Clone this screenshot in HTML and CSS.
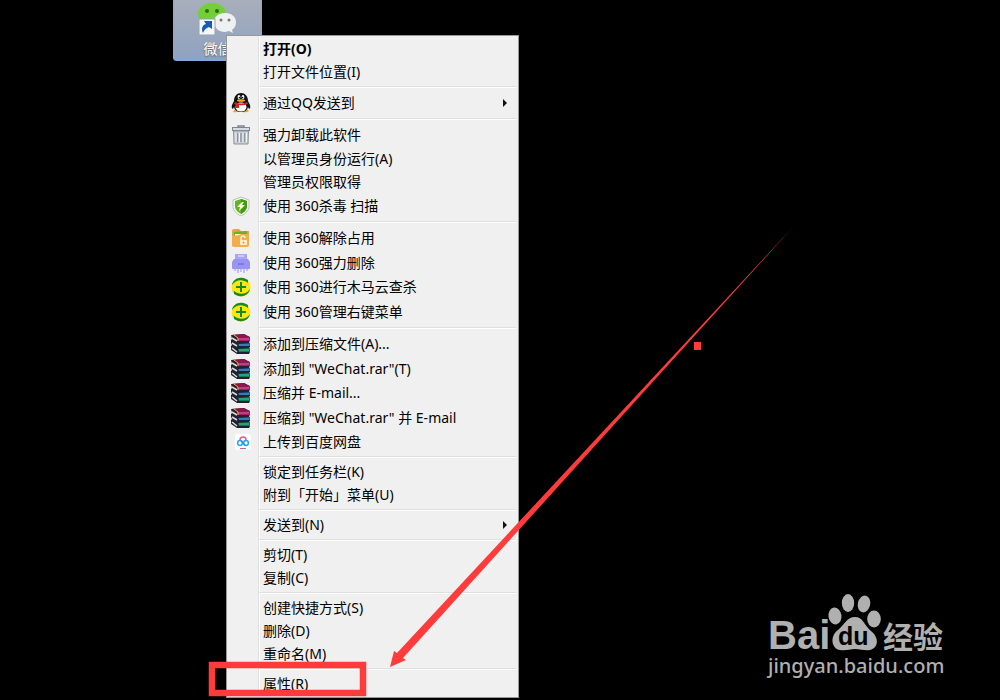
FILE: index.html
```html
<!DOCTYPE html>
<html lang="zh-CN">
<head>
    <meta charset="UTF-8">
    <meta name="viewport" content="width=device-width, initial-scale=1.0">
    <title>微信 - 右键菜单</title>
    <link rel="stylesheet" href="styles.css">
</head>
<body>

    <!-- Símbolos usados mais de uma vez -->
    <svg class="symbols" aria-hidden="true">
        <symbol id="icon-360" viewBox="0 0 20 20">
            <circle cx="10" cy="10" r="9.5" fill="#ffe60f"/>
            <path d="M1 13A9.500 9.500 0 0 0 17 16Q9 20 1 13Z" fill="#f8b414"/>
            <path d="M1 8C2 2 9-1 15 2L17 3V6C12 2 5 2 1 8Z" fill="#158b22"/>
            <path d="M19 12C18 18 11 21 5 18L3 17V14C8 18 15 18 19 12Z" fill="#158b22"/>
            <path d="M10 5V15M5 10H15" stroke="#138a20" stroke-width="2"/>
        </symbol>
        <symbol id="icon-rar" viewBox="0 0 20 20">
            <path d="M0 1L13 0L19 3V7L18 8L19 10V13L18 14L19 16V18L18 20H6L0 16V12L1 11L0 9V6L1 5Z" fill="#222030"/>
            <path d="M1 1L13 0L18 3L7 4Z" fill="#8c164b"/>
            <path d="M6 4L19 3V7H7Z" fill="#a91d68"/>
            <path d="M7 5H18" stroke="#e05ba5"/>
            <path d="M7 10L19 9V12H8Z" fill="#1262a5"/>
            <path d="M8 11H18" stroke="#4f9bd0"/>
            <path d="M7 15L19 14V18H8Z" fill="#087f59"/>
            <path d="M8 16H18" stroke="#49c694"/>
            <path d="M1 4L6 7M1 9L6 12M1 14L6 18" stroke="#d9d9d9" stroke-width="1.6"/>
            <path d="M3 1L7 4V7" fill="none" stroke="#dbba26"/>
        </symbol>
    </svg>

    <main class="desktop">
        <a class="shortcut" href="#">
            <svg viewBox="0 0 42 36" aria-hidden="true">
                <path d="M15 2C6 2 1 7 1 13C1 17 3 20 7 22L6 26L11 23H17C25 23 29 19 29 13C29 7 24 2 15 2Z" fill="#73cf35"/>
                <circle cx="10" cy="10" r="2" fill="#2c6d16"/>
                <circle cx="20" cy="10" r="2" fill="#2c6d16"/>
                <path d="M28 12C21 12 17 16 17 21C17 27 22 31 28 31L32 30L36 32L35 29C38 27 39 24 39 21C39 16 35 12 28 12Z" fill="#eff0f1"/>
                <circle cx="24" cy="19" r="1.5" fill="#777"/>
                <circle cx="32" cy="19" r="1.5" fill="#777"/>
                <rect x="2" y="18" width="16" height="16" fill="#f3f6fa" stroke="#9aa3ae"/>
                <path d="M6 32C4 28 5 24 9 23L7 20H15V28L12 26C9 27 7 29 6 32Z" fill="#1b5ca8"/>
            </svg>
            <span>微信</span>
        </a>

        <menu class="context-menu">
            <li><button class="default">打开(O)</button></li>
            <li><button>打开文件位置(I)</button></li>
            <li class="line"></li>
            <li><button class="tall submenu">
                <svg viewBox="0 0 20 20" aria-hidden="true">
                    <path d="M3 17Q6 14 9 18Q5 20 2 19ZM11 18Q15 14 18 18Q16 20 11 19Z" fill="#f5a414"/>
                    <path d="M10 0C6 0 3 3 3 8L1 12C0 16 2 17 3 14Q4 19 10 19Q16 19 17 14C18 17 20 16 19 12L17 8C17 3 14 0 10 0Z" fill="#111"/>
                    <ellipse cx="10" cy="14" rx="5.500" ry="4.500" fill="#fff"/>
                    <ellipse cx="8" cy="4" rx="1.4" ry="2" fill="#fff"/>
                    <ellipse cx="12" cy="4" rx="1.4" ry="2" fill="#fff"/>
                    <circle cx="8.4" cy="4.5" r=".7"/>
                    <circle cx="11.6" cy="4.5" r=".7"/>
                    <ellipse cx="10" cy="7.5" rx="4" ry="1.3" fill="#f9ae19"/>
                    <path d="M4 9Q10 12 16 9L17 11Q12 13 8 12V15H5V12L3 11Z" fill="#e31b20"/>
                </svg>
                通过QQ发送到</button></li>
            <li class="line"></li>
            <li><button class="tall">
                <svg viewBox="0 0 20 20" aria-hidden="true">
                    <path d="M7 3V1H13V3" fill="none" stroke="#7c8794" stroke-width="1.5"/>
                    <rect x="1.5" y="2.5" width="17" height="3" fill="#d5dbe1" stroke="#7c8794"/>
                    <path d="M2.5 6H17.5L17 19H3Z" fill="#c9d0d8" stroke="#89939f"/>
                    <path d="M6.5 8V17M10 8V17M13.5 8V17" stroke="#8a949f" stroke-width="1.4"/>
                    <path d="M5 8V17M8.5 8V17M12 8V17M15.5 8V17" stroke="#f1f3f5"/>
                </svg>
                强力卸载此软件</button></li>
            <li><button>以管理员身份运行(A)</button></li>
            <li><button>管理员权限取得</button></li>
            <li><button class="tall">
                <svg viewBox="0 0 20 20" aria-hidden="true">
                    <path d="M10 1L18 4V10C18 15 14 18 10 20C6 18 2 15 2 10V4Z" fill="#f4f6f0" stroke="#b9c2b5"/>
                    <path d="M10 3L16 5V10C16 14 13 16 10 18C7 16 4 14 4 10V5Z" fill="#62b325"/>
                    <path d="M10 3L16 5V10C16 14 13 16 10 18Z" fill="#459716"/>
                    <path d="M11 6L6 11H9L8 15L14 9H11L13 6Z" fill="#f5ffd8"/>
                </svg>
                使用 360杀毒 扫描</button></li>
            <li class="line"></li>
            <li><button class="tall">
                <svg viewBox="0 0 20 20" aria-hidden="true">
                    <path d="M1 3Q1 1 3 1H8L10 3H18V18H1Z" fill="#e5a53f"/>
                    <path d="M3 4L16 3V9H3Z" fill="#70ad36"/>
                    <path d="M4 6H17V9H4Z" fill="#fff6d4"/>
                    <path d="M1 8L8 7L10 6H18V17Q18 19 16 19H3Q1 19 1 17Z" fill="#f3ae4c"/>
                    <rect x="9" y="12" width="7" height="5" rx="1" fill="#fff1cf"/>
                    <path d="M10 12V10Q10 8 12 8Q14 8 14 10" fill="none" stroke="#fff1cf" stroke-width="1.5"/>
                    <circle cx="12.5" cy="14.5" r="1" fill="#e38d26"/>
                </svg>
                使用 360解除占用</button></li>
            <li><button class="tall">
                <svg viewBox="0 0 20 20" aria-hidden="true">
                    <path d="M4 1H16V8H4Z" fill="#a9a6fa"/>
                    <path d="M3 6H17L19 9V15Q19 16 18 16H2Q1 16 1 15V9Z" fill="#9994f3"/>
                    <path d="M7 3H13" stroke="#d8d6ff" stroke-width="1.5"/>
                    <path d="M7 11H13" stroke="#7770df" stroke-width="1.5"/>
                    <path d="M4 16V18M7 16V20M10 16V19M13 16V20M16 16V18" stroke="#b1adfa" stroke-width="1.5"/>
                </svg>
                使用 360强力删除</button></li>
            <li><button class="medium"><svg aria-hidden="true"><use href="#icon-360"/></svg>使用 360进行木马云查杀</button></li>
            <li><button class="tall"><svg aria-hidden="true"><use href="#icon-360"/></svg>使用 360管理右键菜单</button></li>
            <li class="line"></li>
            <li><button class="tall"><svg aria-hidden="true"><use href="#icon-rar"/></svg>添加到压缩文件(A)...</button></li>
            <li><button class="tall"><svg aria-hidden="true"><use href="#icon-rar"/></svg>添加到 "WeChat.rar"(T)</button></li>
            <li><button class="medium"><svg aria-hidden="true"><use href="#icon-rar"/></svg>压缩并 E-mail...</button></li>
            <li><button class="tall"><svg aria-hidden="true"><use href="#icon-rar"/></svg>压缩到 "WeChat.rar" 并 E-mail</button></li>
            <li><button>
                <svg viewBox="0 0 20 20" aria-hidden="true">
                    <rect x="4" y="2" width="16" height="16" rx="3" fill="#fff"/>
                    <path d="M9 8A3 3 0 0 1 15 8" fill="none" stroke="#f25875" stroke-width="1.5"/>
                    <circle cx="9" cy="11" r="2.4" fill="none" stroke="#24a5f4" stroke-width="1.5"/>
                    <circle cx="15" cy="11" r="2.4" fill="none" stroke="#24a5f4" stroke-width="1.5"/>
                    <path d="M10 9L14 13" stroke="#3294ed" stroke-width="1.5"/>
                    <path d="M9 16.5H12" stroke="#ef5370"/>
                    <path d="M12 16.5H15" stroke="#439cf0"/>
                </svg>
                上传到百度网盘</button></li>
            <li class="line"></li>
            <li><button>锁定到任务栏(K)</button></li>
            <li><button>附到「开始」菜单(U)</button></li>
            <li class="line"></li>
            <li><button class="submenu">发送到(N)</button></li>
            <li class="line"></li>
            <li><button>剪切(T)</button></li>
            <li><button>复制(C)</button></li>
            <li class="line"></li>
            <li><button>创建快捷方式(S)</button></li>
            <li><button>删除(D)</button></li>
            <li><button>重命名(M)</button></li>
            <li class="line"></li>
            <li><button>属性(R)</button></li>
        </menu>

        <!-- Seta e marcação em vermelho -->
        <svg class="marks" viewBox="0 0 1000 700" aria-hidden="true">
            <path d="M793 227L397 653L394 651L390 667L406 660L403 658Z" fill="#ff3b3b"/>
            <rect x="694" y="342" width="7" height="8" fill="#ff3b3b"/>
            <rect x="212" y="665" width="151" height="28" fill="none" stroke="#ff3b3b" stroke-width="6.5"/>
        </svg>

        <svg class="watermark" viewBox="0 0 190 90" role="img" aria-label="Baidu 经验">
            <g fill="#b0b0b0">
                <text class="bai" x="5" y="54">Bai</text>
                <ellipse cx="72" cy="21" rx="6.5" ry="8.5" transform="rotate(-8 72 21)"/>
                <ellipse cx="85" cy="8" rx="6.2" ry="9"/>
                <ellipse cx="101" cy="9" rx="6.2" ry="8.5" transform="rotate(12 101 9)"/>
                <ellipse cx="111" cy="24" rx="6.8" ry="8.5"/>
                <path d="M92 22C84 22 82 29 75 35C66 42 69 54 77 55C83 56 87 54 92 54C98 54 102 56 107 55C116 53 116 42 108 36C101 30 100 22 92 22Z"/>
                <text class="jingyan" x="120" y="53">经验</text>
                <text class="address" x="5" y="78">jingyan.baidu.com</text>
            </g>
            <text class="du" x="75" y="50">du</text>
        </svg>
    </main>

</body>
</html>
```
FILE: styles.css
```css
* {
    margin: 0;
    padding: 0;
    box-sizing: border-box;
}
body {
    font-family: "Noto Sans", "Noto Sans CJK SC", sans-serif;
    font-size: 14px;
    background-color: #000;
    color: #000;
}
.symbols {
    position: absolute;
    width: 0;
    height: 0;
}
.desktop {
    position: relative;
    min-height: 100vh;
    overflow: hidden;
}
.shortcut {
    position: absolute;
    top: -4px;
    left: 173px;
    width: 89px;
    height: 65px;
    padding-top: 4px;
    display: flex;
    flex-direction: column;
    align-items: center;
    background: linear-gradient(#a9afba, #8fa2c1);
    border: 1px solid #86a9d8;
    border-radius: 3px;
    color: #fff;
    text-decoration: none;
    line-height: 20px;
}
.shortcut svg {
    width: 42px;
    height: 36px;
    flex-shrink: 0;
}
.shortcut span {
    margin-top: 2px;
    text-shadow: 0 1px 2px #555;
}
.context-menu {
    position: absolute;
    top: 35px;
    left: 226px;
    width: 293px;
    padding: 1px 1px 2px;
    list-style: none;
    border: 1px solid #979797;
    background: linear-gradient(to right, transparent 31px, #e0e0e0 31px, #e0e0e0 32px, #fff 32px, #fff 33px, transparent 33px) #f0f0f0;
}
.context-menu button {
    display: flex;
    align-items: center;
    width: 100%;
    height: 23px;
    padding-left: 35px;
    border: none;
    background: none;
    color: #000;
    font-family: inherit;
    font-size: 14px;
    line-height: 20px;
    text-align: left;
    white-space: nowrap;
}
.context-menu button:hover {
    background-color: #dce8f5;
}
.context-menu button.medium {
    height: 24px;
}
.context-menu button.tall {
    height: 25px;
}
.context-menu button.default {
    font-weight: 700;
}
.context-menu svg {
    width: 20px;
    height: 20px;
    margin-left: -32px;
    margin-right: 12px;
    flex-shrink: 0;
}
.context-menu .submenu::after {
    content: "";
    margin-left: auto;
    margin-right: 10px;
    border: 4px solid transparent;
    border-left-color: #111;
    border-right: none;
}
.context-menu .line {
    height: 2px;
    margin: 3px 1px 2px 31px;
    border-top: 1px solid #e0e0e0;
    border-bottom: 1px solid #fff;
}
.marks {
    position: absolute;
    top: 0;
    left: 0;
    width: 1000px;
    height: 700px;
    pointer-events: none;
}
.watermark {
    position: absolute;
    right: 47px;
    bottom: 15px;
    width: 190px;
    height: 90px;
    overflow: visible;
}
.bai {
    font: bold 40px "Liberation Sans", sans-serif;
}
.du {
    font: bold 25px "Liberation Sans", sans-serif;
    fill: #000;
}
.jingyan {
    font: bold 30px "Noto Sans CJK SC", sans-serif;
}
.address {
    font: 500 20px "Noto Sans", sans-serif;
}
```
